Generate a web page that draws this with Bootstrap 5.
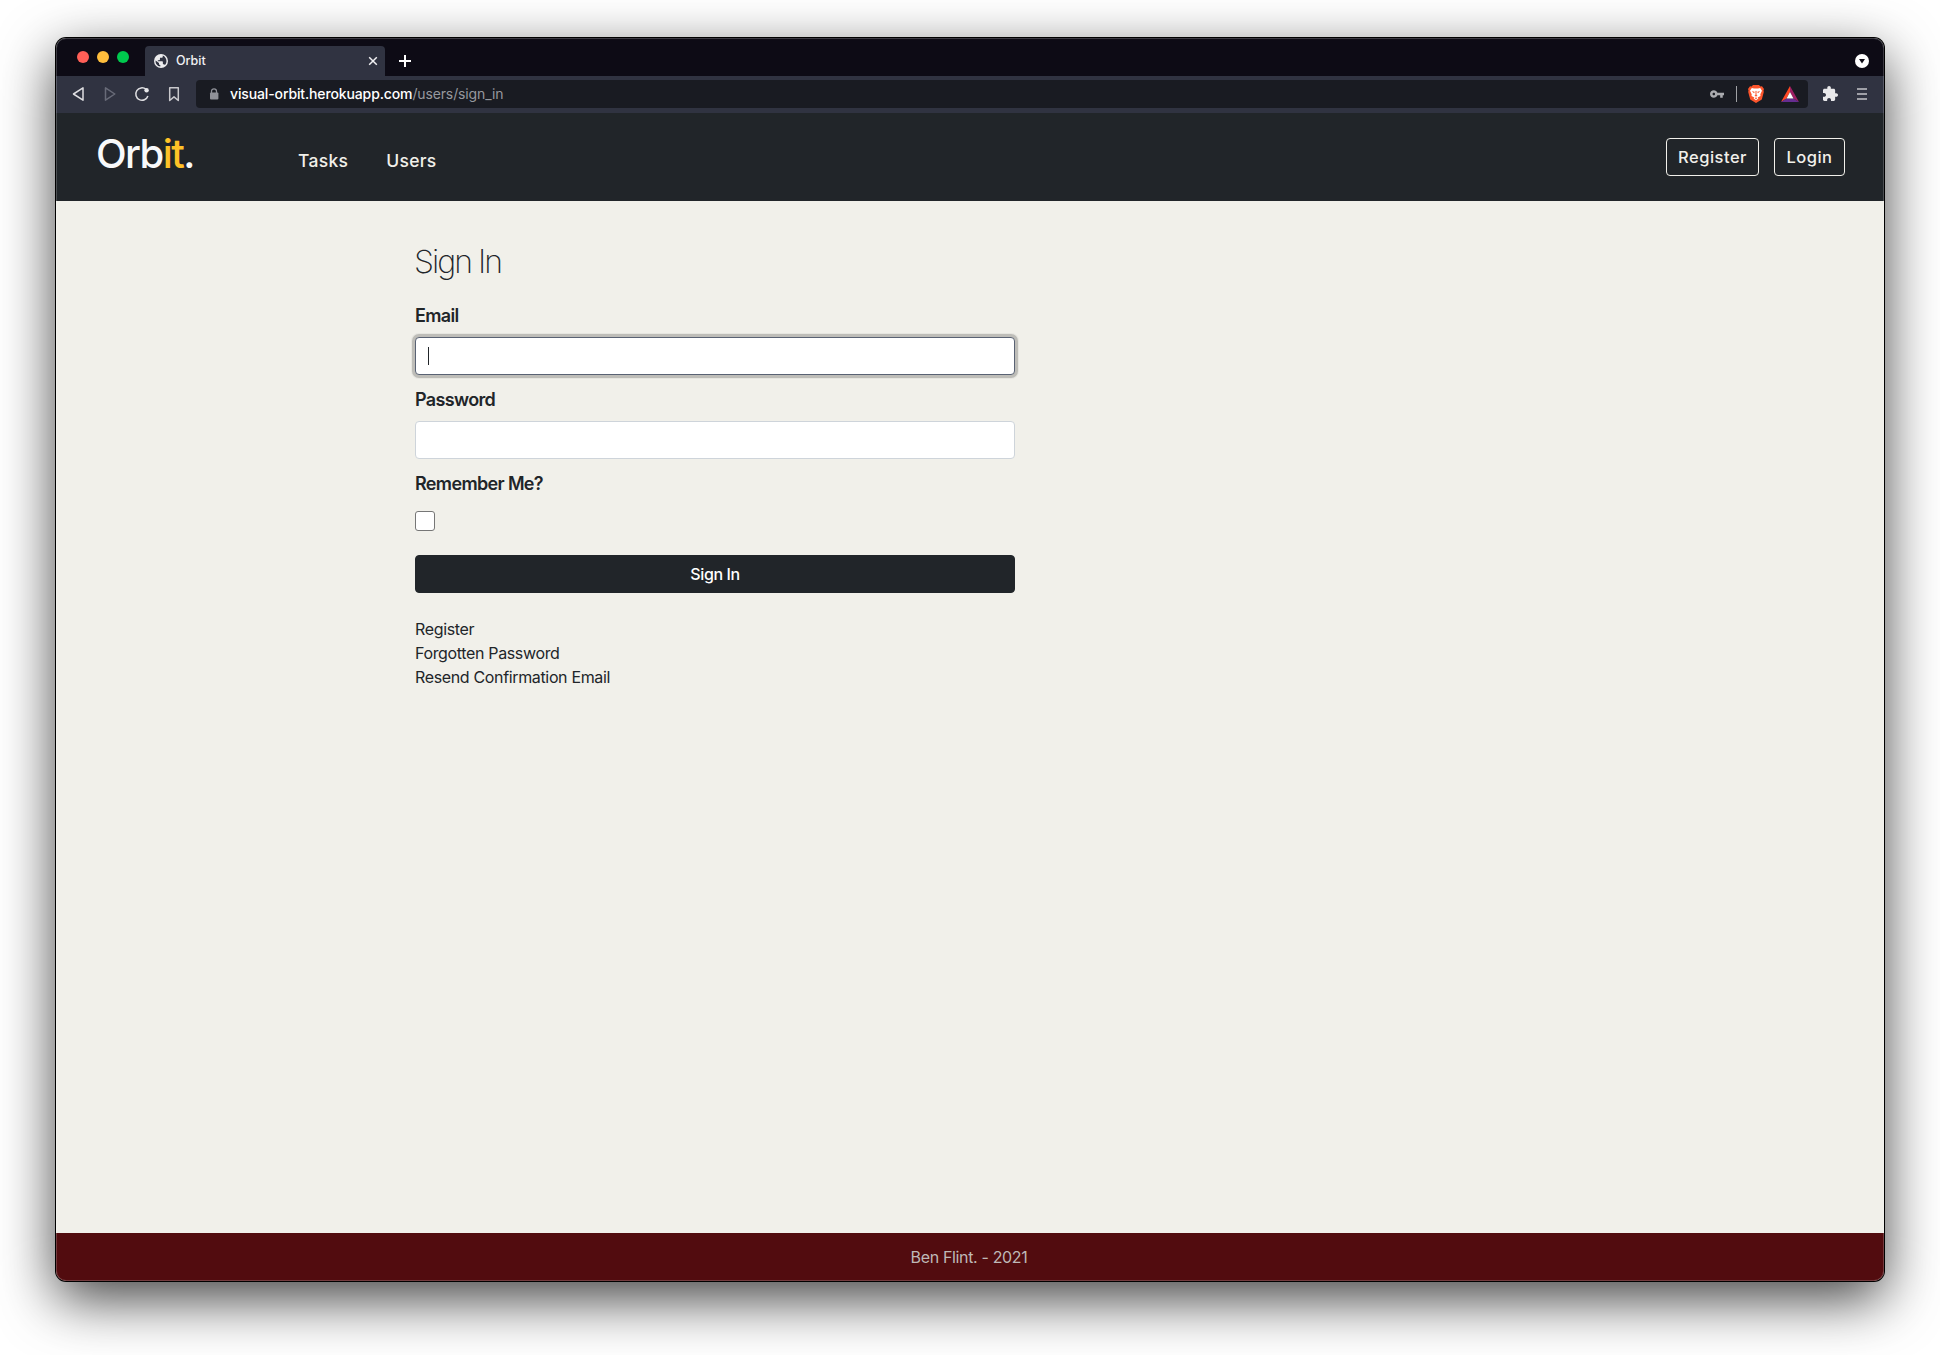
<!DOCTYPE html>
<html lang="en">
<head>
<meta charset="utf-8">
<meta name="viewport" content="width=device-width, initial-scale=1">
<title>Orbit</title>
<link href="https://cdn.jsdelivr.net/npm/bootstrap@5.3.0/dist/css/bootstrap.min.css" rel="stylesheet">
<style>
body{font-family:Inter,"Liberation Sans",sans-serif;background:#fff;color:#212529;letter-spacing:-.35px;padding:38px 56px 74px;height:1355px;overflow:hidden}
svg{display:block;flex:none}
.browser{height:1243px;border-radius:10px;position:relative;overflow:hidden}
.browser::after{content:"";position:absolute;inset:0;border:1px solid rgba(255,255,255,.2);border-radius:10px;pointer-events:none}
.frame{border-radius:10px;box-shadow:0 0 0 1px #000,0 18px 56px rgba(0,0,0,.75)}
.tabstrip{height:38px;background:#0d0b15;padding-left:21px;padding-right:15px}
.lights{padding-top:13px}
.dot{width:12px;height:12px;border-radius:50%;margin-right:8px}
.dot-close{background:#ff5f57}
.dot-min{background:#ffbe3c}
.dot-max{background:#00ca4e}
.tab{width:240px;height:30px;background:#303341;border-radius:4px 4px 0 0;margin-left:8px;padding:0 7px 0 9px;font-size:12.5px;font-weight:500;color:#f1f1f3;letter-spacing:0}
.tab-title{margin-left:8px}
.new-tab{margin:0 0 8px 14px}
.toolbar{height:37px;background:#303341;padding:0 17px 2px 15px}
.address{height:28px;background:#191b22;border-radius:4px;font-size:14px;color:#96989e;letter-spacing:-.13px;margin-left:1px;padding:0 9px 0 13px}
.address b{font-weight:500;color:#fff}
.url{margin-left:11px}
.sep{width:1px;height:16px;background:#a0a1a5;margin:0 11px 0 12px}
.rewards{margin-left:17px}
.puzzle{margin:0 19px 0 15px}
.topbar{height:88px;background:#212529;padding:0 39px 0 40px}
.logo{font-size:40px;font-weight:500;letter-spacing:-1.6px;color:#f8f9fa;line-height:48px;width:202px;padding-top:17px}
.logo span{color:#ffc227}
.topbar .nav{padding-top:34px;gap:38px}
.topbar .nav-link{font-size:17.5px;font-weight:500;letter-spacing:.3px;color:#f1f0ea;line-height:27px;padding:0}
.btn{border-radius:4px;letter-spacing:-.4px;font-weight:500}
.auth{gap:15px}
.topbar .btn{--bs-btn-color:#f1f0ea;--bs-btn-border-color:#f1f0ea;font-size:16.5px;letter-spacing:.5px;padding:0;height:38px}
.btn-register{width:93px}
.btn-login{width:71px}
.page{background:#f1f0ea;height:1032px;padding:42px 0 0 359px}
.form-col{width:600px}
h1{font-size:32px;font-weight:200;letter-spacing:-1.95px;line-height:38px;margin:0 0 21px -1px}
.form-label{font-size:18px;font-weight:600;line-height:27px;letter-spacing:-.65px;display:block}
.next-label{margin-top:11px}
.form-control{height:38px;border-radius:4px;border-color:#ced4da;background:#fff}
.focused{border-color:#596273;box-shadow:0 0 0 3px #bebdb8,0 0 0 4px rgba(190,189,184,.2)}
.caret{position:absolute;left:13px;top:10px;width:1px;height:18px;background:#212529}
.form-check-input{width:20px;height:20px;border:1px solid #767676;border-radius:3px!important;background-color:#fff;margin-top:14px}
.page a{color:#212529;text-decoration:none;line-height:24px}
footer{height:48px;background:#520c0f;color:#bfb9b7;padding:0 2px 1px 0}
</style>
</head>
<body>
<div class="frame"><div class="browser d-flex flex-column">
  <div class="tabstrip d-flex align-items-end">
    <div class="d-flex align-self-start lights">
      <span class="dot dot-close"></span><span class="dot dot-min"></span><span class="dot dot-max"></span>
    </div>
    <div class="tab d-flex align-items-center">
      <svg width="14" height="14" viewBox="2 2 20 20"><circle cx="12" cy="12" r="10" fill="#ececee"/><path d="M14.500 4.200v1.600c0 .900-.700 1.700-1.700 1.700h-2.300v2.300c0 .700-.500 1.200-1.200 1.200H7.500v1.500h5.800c.800 0 1.400.600 1.400 1.400v2.600h1.100c.800 0 1.600.500 1.900 1.200 1.400-1.400 2.100-3.400 2.100-5.600 0-3.600-2.200-6.700-5.300-7.900zM4.300 11.200c-.600 4.400 2.600 8.200 6.700 8.700v-2.200c-1 0-1.900-.800-1.900-1.900v-1z" fill="#303341"/></svg>
      <span class="tab-title flex-grow-1">Orbit</span>
      <svg width="10" height="10" viewBox="0 0 10 10" stroke="#f1f1f3" stroke-width="1.5"><path d="M1.200 1.200l7.600 7.600M8.800 1.200L1.200 8.800"/></svg>
    </div>
    <svg class="new-tab" width="12" height="14" viewBox="0 0 12 14" stroke="#fff" stroke-width="2"><path d="M6 1v12M0 7h12"/></svg>
    <svg class="mb-2 ms-auto" width="14" height="14" viewBox="0 0 14 14"><circle cx="7" cy="7" r="7" fill="#fff"/><path d="M4 5h6L7 9.500z" fill="#0d0b15"/></svg>
  </div>
  <div class="toolbar d-flex align-items-center">
    <svg width="124" height="20" viewBox="0 0 124 20" fill="none" stroke="#dedee1" stroke-width="1.500" stroke-linejoin="round">
      <path d="M12 3.800v12.400L2.500 10z"/>
      <path d="M34.500 3.800v12.400L43.800 10z" stroke="#686b78"/>
      <path d="M75 5.300A6.200 6.200 0 1 0 76.900 12"/><circle cx="75.600" cy="6.300" r="2.200" fill="#e8e8ea" stroke="none"/>
      <path d="M98.700 3.800h8.600v12.700l-4.300-3.600-4.300 3.600z" stroke="#c9c9cd"/>
    </svg>
    <div class="address d-flex align-items-center flex-grow-1">
      <svg width="10" height="12" viewBox="0 0 10 12"><path d="M2.500 5V3.300a2.500 2.500 0 0 1 5 0V5" fill="none" stroke="#8f9198" stroke-width="1.300"/><rect x="1" y="4.500" width="8.400" height="7" rx="1" fill="#8f9198"/></svg>
      <span class="url flex-grow-1"><b>visual-orbit.herokuapp.com</b>/users/sign_in</span>
      <svg width="14" height="8" viewBox="1 6 22 12" fill="#aaabaf"><path d="M12.650 10C11.830 7.670 9.610 6 7 6c-3.310 0-6 2.690-6 6s2.690 6 6 6c2.610 0 4.830-1.670 5.650-4H17v4h4v-4h2v-4H12.650zM7 14c-1.100 0-2-.900-2-2s.900-2 2-2 2 .900 2 2-.900 2-2 2z"/></svg>
      <div class="sep"></div>
      <svg width="16" height="18" viewBox="0 0 16 18"><path d="M5 0h6l1.400 1.500 1.600-.2 2 2.700-.500 1.500.3 1.500-2 7.500L8 18l-5.800-3.500L.2 7l.3-1.500L0 4l2-2.700 1.600.2z" fill="#fb542b"/><path d="M3.800 3l2.200.4h4l2.200-.4 1.800 2.800-1.700 3.500.2 1.600-2.800 1.700.7 1L8 15.200l-2.400-1.600.7-1-2.800-1.700.2-1.600L2 5.800z" fill="#fff"/><path d="M4.200 6.300l2.400.6-.7 1.200zM11.800 6.300l-2.400.6.7 1.200zM7.700 6h.6v3.800l1 .8L8 11.500l-1.300-.9 1-.8zM6.800 13.200L8 12.600l1.200.6L8 14z" fill="#fb542b" stroke="#fb542b" stroke-width=".3"/></svg>
      <svg class="rewards" width="18" height="16" viewBox="0 0 18 16"><path d="M9 0L0 16l5.500-3.500L9 6z" fill="#ff4724"/><path d="M9 0l9 16-5.500-3.500L9 6z" fill="#9e1f63"/><path d="M0 16h18l-5.500-3.500h-7z" fill="#662d91"/><path d="M9 6l3.500 6.500h-7z" fill="#fff"/></svg>
    </div>
    <svg class="puzzle" width="15" height="15" viewBox="2 1 21 21" fill="#e9e9eb"><path d="M20.500 11H19V7c0-1.100-.900-2-2-2h-4V3.500C13 2.120 11.880 1 10.500 1S8 2.120 8 3.500V5H4c-1.100 0-1.990.900-1.990 2v3.800H3.500c1.490 0 2.700 1.210 2.700 2.700s-1.210 2.700-2.700 2.700H2V20c0 1.100.900 2 2 2h3.800v-1.500c0-1.490 1.210-2.700 2.700-2.700 1.490 0 2.700 1.210 2.700 2.700V22H17c1.100 0 2-.900 2-2v-4h1.500c1.380 0 2.500-1.120 2.500-2.500S21.880 11 20.500 11z"/></svg>
    <svg width="10" height="12" viewBox="0 0 10 12" stroke="#c4c5c9" stroke-width="1.700"><path d="M0 1h10M0 6h10M0 11h10"/></svg>
  </div>
  <nav class="topbar d-flex">
    <div class="logo">Orb<span>it</span>.</div>
    <ul class="nav">
      <li><a class="nav-link" href="#">Tasks</a></li>
      <li><a class="nav-link" href="#">Users</a></li>
    </ul>
    <div class="auth ms-auto d-flex align-self-center">
      <button class="btn btn-outline-light btn-register">Register</button>
      <button class="btn btn-outline-light btn-login">Login</button>
    </div>
  </nav>
  <main class="page">
    <form class="form-col">
      <h1>Sign In</h1>
      <label class="form-label">Email</label>
      <div class="position-relative"><input class="form-control focused" type="email"><span class="caret"></span></div>
      <label class="form-label next-label">Password</label>
      <input class="form-control" type="password">
      <label class="form-label next-label">Remember Me?</label>
      <input class="form-check-input d-block" type="checkbox">
      <button type="button" class="btn btn-dark w-100 mt-4">Sign In</button>
      <div class="d-flex flex-column align-items-start mt-4">
        <a href="#">Register</a><a href="#">Forgotten Password</a><a href="#">Resend Confirmation Email</a>
      </div>
    </form>
  </main>
  <footer class="d-flex align-items-center justify-content-center"><span>Ben Flint. - 2021</span></footer>
</div></div>
<script src="https://cdn.jsdelivr.net/npm/bootstrap@5.3.0/dist/js/bootstrap.bundle.min.js"></script>
</body>
</html>
